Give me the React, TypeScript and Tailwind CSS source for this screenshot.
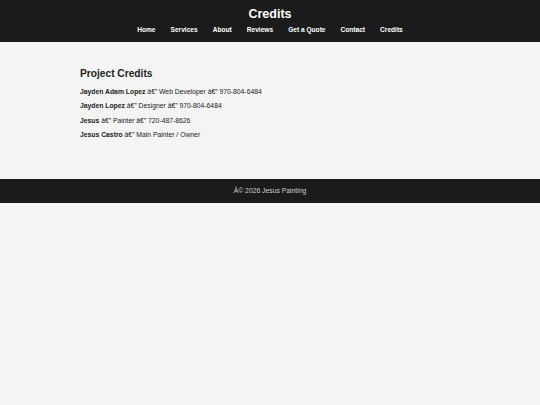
const NAV = ["Home", "Services", "About", "Reviews", "Get a Quote", "Contact", "Credits"];

const CREDITS = [
  { name: "Jayden Adam Lopez", role: "Web Developer", phone: "970-804-6484" },
  { name: "Jayden Lopez", role: "Designer", phone: "970-804-6484" },
  { name: "Jesus", role: "Painter", phone: "720-487-8626" },
  { name: "Jesus Castro", role: "Main Painter / Owner" },
];

// the live site serves these as mis-decoded em dash / copyright
const DASH = "\u00e2\u20ac\u201d";
const COPY = "\u00c2\u00a9";

export default function App() {
  return (
    <div className="min-h-[405px] bg-[#f4f4f4] text-[#222] font-['Liberation_Sans',Arial,sans-serif]">
      <header className="h-[42px] bg-[#1b1b1b] text-white flex flex-col items-center pt-[6px]">
        <h1 className="text-[12.5px] font-bold leading-[16px]">Credits</h1>
        <nav className="mt-[3px] flex gap-[15px] text-[6.6px] font-bold leading-[9px]">
          {NAV.map((n) => (
            <a key={n} href="#">{n}</a>
          ))}
        </nav>
      </header>

      <main className="mx-[80px] pt-[25px] pb-[39px]">
        <h2 className="text-[10.2px] font-bold leading-[13px] mb-[7px]">Project Credits</h2>
        <div className="flex flex-col gap-[4.4px] text-[6.8px] leading-[10px]">
          {CREDITS.map((c) => (
            <p key={c.name}>
              <strong>{c.name}</strong> {DASH} {c.role}
              {c.phone && <> {DASH} {c.phone}</>}
            </p>
          ))}
        </div>
      </main>

      <footer className="h-[24px] bg-[#1b1b1b] text-[#cfcfcf] flex items-center justify-center text-[6.8px]">
        {COPY} 2026 Jesus Painting
      </footer>
    </div>
  );
}
